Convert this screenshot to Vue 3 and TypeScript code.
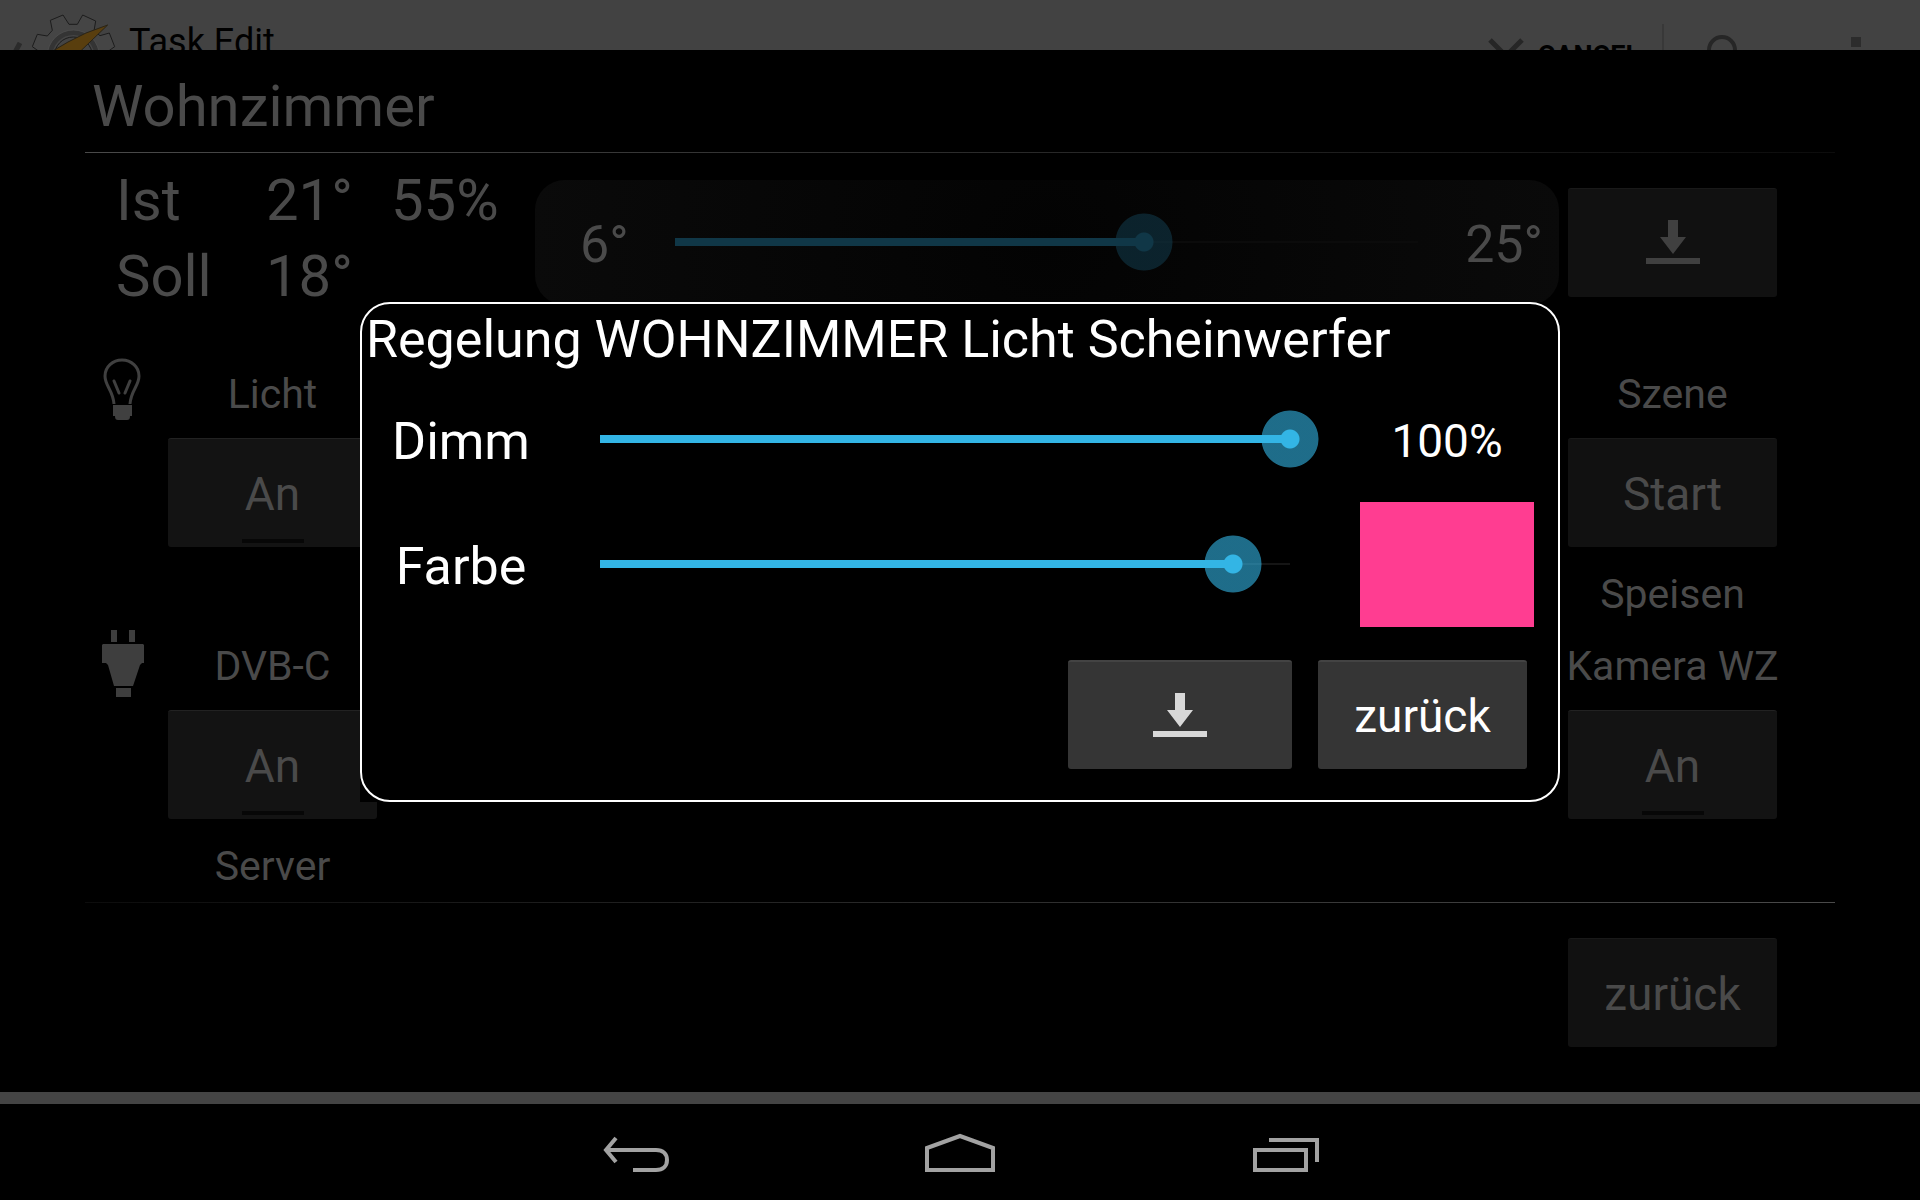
<script setup lang="ts">
import { computed, ref } from 'vue'

interface Device {
  icon?: 'bulb' | 'plug'
  label: string
  button: string
  toggle: boolean
  next?: string
}

const leftDevices: Device[] = [
  { icon: 'bulb', label: 'Licht', button: 'An', toggle: true },
  { icon: 'plug', label: 'DVB-C', button: 'An', toggle: true, next: 'Server' },
]

const rightDevices: Device[] = [
  { label: 'Szene', button: 'Start', toggle: false, next: 'Speisen' },
  { label: 'Kamera WZ', button: 'An', toggle: true },
]

const target = ref(18)
const dim = ref(100)
const hue = ref(330)

const targetFill = computed(() => `${((target.value - 6) / 19) * 100}%`)
const hueFill = computed(() => `${(hue.value / 360) * 100}%`)
const swatch = computed(() => `hsl(${hue.value + 4}, 100%, 62%)`)
</script>

<template>
  <div class="screen">
    <div class="window">
      <header class="actionbar">
        <div class="actionbar-row">
          <svg class="chevron" width="12" height="28" viewBox="0 0 12 28">
            <path d="M10 1 3 14l7 13" fill="none" stroke="#2b2b2b" stroke-width="5" />
          </svg>
          <svg class="gear" width="84" height="84" viewBox="96 39 252 252">
            <path
              d="M97 137l15-37 30 5 15-17-6-30 38-16 18 28h25l16-28 39 18-5 30 18 14 28-8 16 41-24 17v22l24 17-16 38-30-6-17 17 6 30-38 16-17-25h-24l-17 25-38-16 6-30-17-17-30 6-16-38 25-17v-22z"
              fill="#454545" stroke="#1c1c1c" stroke-width="3" />
            <circle cx="220" cy="165" r="70" fill="none" stroke="#343434" stroke-width="14" />
            <circle cx="220" cy="165" r="78" fill="none" stroke="#505050" stroke-width="2" />
            <circle cx="220" cy="165" r="57" fill="#444" stroke="#1c1c1c" stroke-width="3" />
            <path d="M323 72 258 96l-54 27-44 26-42 51 60-2 66-50z" fill="#593e0e" stroke="#2a2417" stroke-width="3" />
          </svg>
          <h2 class="task-title">Task Edit</h2>
          <button class="bar-button cancel" type="button">
            <svg width="36" height="36" viewBox="0 0 36 36">
              <path d="M2 2l32 32M34 2 2 34" stroke="#262626" stroke-width="5" />
            </svg>
            CANCEL
          </button>
          <span class="separator"></span>
          <button class="bar-button search" type="button" aria-label="Suchen">
            <svg width="42" height="42" viewBox="0 0 42 42">
              <circle cx="15" cy="15" r="13" fill="none" stroke="#262626" stroke-width="4" />
              <path d="M24 24l15 15" stroke="#262626" stroke-width="5" />
            </svg>
          </button>
          <button class="bar-button" type="button" aria-label="Mehr">
            <svg width="10" height="38" viewBox="0 0 10 38">
              <path d="M0 0h10v10H0zM0 14h10v10H0zM0 28h10v10H0z" fill="#2c2c2c" />
            </svg>
          </button>
        </div>
      </header>

      <main class="scene">
        <h1 class="room">Wohnzimmer</h1>
        <hr class="rule" />

        <section class="climate">
          <dl class="readings">
            <dt>Ist</dt>
            <dd>21°</dd>
            <dd>55%</dd>
            <dt>Soll</dt>
            <dd>18°</dd>
          </dl>
          <div class="thermostat">
            <span class="limit">6°</span>
            <input
              v-model.number="target" class="range dimmed" type="range" min="6" max="25"
              aria-label="Solltemperatur" :style="{ '--fill': targetFill }" />
            <span class="limit upper">25°</span>
          </div>
          <button class="key" type="button" aria-label="Übernehmen">
            <svg width="54" height="44" viewBox="0 0 54 44" fill="currentColor">
              <path d="M14 17h8V0h10v17h8L27 34zM0 38h54v6H0z" />
            </svg>
          </button>
        </section>

        <section class="devices">
          <div class="column">
            <div v-for="d in leftDevices" :key="d.label" class="device">
              <svg v-if="d.icon === 'bulb'" class="device-icon" width="42" height="70" viewBox="0 0 42 70">
                <path
                  d="M12 46C11 32 3 28 3 18a17 16 0 0 1 34 0c0 10-8 14-9 28"
                  fill="none" stroke="#404040" stroke-width="3" />
                <path d="M12 23l5 12M28 23l-5 12" stroke="#404040" stroke-width="3" stroke-linecap="round" />
                <path d="M11 47h19v11h-2c0 3-1 4-3 4h-9c-2 0-3-1-3-4h-2z" fill="#404040" />
              </svg>
              <svg v-else class="device-icon" width="42" height="70" viewBox="0 0 42 70">
                <path
                  d="M9 0h6v12H9zM27 0h6v12h-6zM1 14h40l1 1v18h-2l-2 2-7 21H12L6 35l-2-2H0V15zM14 58h15v9H14z"
                  fill="#3e3e3e" />
              </svg>
              <span class="caption">{{ d.label }}</span>
              <button class="key" :class="{ toggle: d.toggle }" type="button">{{ d.button }}</button>
              <span class="caption follow">{{ d.next }}</span>
            </div>
          </div>
          <div class="column">
            <div v-for="d in rightDevices" :key="d.label" class="device plain">
              <span class="caption">{{ d.label }}</span>
              <button class="key" :class="{ toggle: d.toggle }" type="button">{{ d.button }}</button>
              <span class="caption follow">{{ d.next }}</span>
            </div>
          </div>
        </section>

        <hr class="rule reverse" />
        <footer class="scene-footer">
          <button class="key" type="button">zurück</button>
        </footer>
      </main>

      <div class="overlay">
        <div class="dialog" role="dialog" aria-labelledby="dialog-title">
          <div class="dialog-frame">
            <h2 id="dialog-title" class="dialog-title">Regelung WOHNZIMMER Licht Scheinwerfer</h2>
            <div class="control">
              <label for="dim">Dimm</label>
              <input
                id="dim" v-model.number="dim" class="range" type="range" min="0" max="100"
                :style="{ '--fill': dim + '%' }" />
              <output for="dim">{{ dim }}%</output>
            </div>
            <div class="control">
              <label for="hue">Farbe</label>
              <input
                id="hue" v-model.number="hue" class="range" type="range" min="0" max="360"
                :style="{ '--fill': hueFill }" />
              <div class="swatch" :style="{ backgroundColor: swatch }"></div>
            </div>
            <div class="actions">
              <button class="key bright wide" type="button" aria-label="Übernehmen">
                <svg width="54" height="44" viewBox="0 0 54 44" fill="#d8d8d8">
                  <path d="M14 17h8V0h10v17h8L27 34zM0 38h54v6H0z" />
                </svg>
              </button>
              <button class="key bright" type="button">zurück</button>
            </div>
          </div>
        </div>
      </div>
    </div>

    <nav class="navbar">
      <button type="button" aria-label="Zurück">
        <svg width="72" height="40" viewBox="0 0 72 40">
          <path d="M7 18h50c7 0 11 4 11 10s-4 10-11 10H34M17 6 7 18l10 12" />
        </svg>
      </button>
      <button type="button" aria-label="Startseite">
        <svg width="72" height="40" viewBox="0 0 72 40">
          <path d="M3 38V16L36 4l33 12v22z" />
        </svg>
      </button>
      <button type="button" aria-label="Letzte Apps">
        <svg width="72" height="40" viewBox="0 0 72 40">
          <path d="M6 18h51v20H6zM20 8h48v22" />
        </svg>
      </button>
    </nav>
  </div>
</template>

<style>
body {
  margin: 0;
  background: #000;
}
</style>

<style scoped>
.screen {
  display: flex;
  flex-direction: column;
  min-height: 100vh;
  background: #000;
  color: #4a4a4a;
  font-family: Roboto, "Noto Sans", sans-serif;
}

.screen * {
  box-sizing: border-box;
}

h1,
h2,
dl,
dd {
  margin: 0;
  font-weight: 400;
}

button {
  font-family: inherit;
  border: 0;
  padding: 0;
}

svg {
  display: block;
  flex: none;
}

.window {
  position: relative;
  flex: 1;
  display: flex;
  flex-direction: column;
  border-bottom: 12px solid #444;
}

.actionbar {
  height: 50px;
  overflow: hidden;
  background: #424242;
}

.actionbar-row {
  display: flex;
  align-items: center;
  height: 112px;
  padding: 0 59px 0 10px;
}

.gear {
  margin-left: 10px;
}

.task-title {
  flex: 1;
  margin-left: 13px;
  padding-bottom: 28px;
  color: #000;
  font-size: 36px;
  line-height: 42px;
}

.bar-button {
  display: flex;
  align-items: center;
  background: none;
}

.cancel {
  gap: 14px;
  color: #000;
  font-size: 27px;
  font-weight: 700;
}

.separator {
  width: 2px;
  height: 64px;
  margin: 0 43px 0 22px;
  background: #383838;
}

.search {
  margin-right: 102px;
}

.scene {
  flex: 1;
  padding: 0 85px;
}

.room {
  padding: 11px 0 1px 7px;
  font-size: 58px;
  line-height: 90px;
}

.rule {
  height: 1px;
  margin: 0;
  border: 0;
  background: linear-gradient(to right, #4a4a4a, #0c0c0c);
}

.rule.reverse {
  background: linear-gradient(to left, #4a4a4a, #0c0c0c);
}

.climate {
  display: flex;
  align-items: center;
  padding: 9px 58px 0 31px;
}

.readings {
  display: grid;
  grid-template-columns: 150px 125px auto;
  align-content: start;
  justify-content: start;
  width: 419px;
  padding-bottom: 9px;
  font-size: 58px;
  line-height: 76px;
}

.thermostat {
  flex: 1;
  display: flex;
  align-items: center;
  height: 125px;
  margin-right: 9px;
  padding: 0 16px 2px 45px;
  border-radius: 30px;
  background: radial-gradient(circle, #030303, #0a0a0a);
}

.limit {
  width: 66px;
  padding-top: 5px;
  font-size: 52px;
}

.limit.upper {
  width: 96px;
  text-align: right;
}

.range {
  --line: #33b5e5;
  --halo: rgba(51, 181, 229, 0.6);
  --rail: #151515;
  flex: 1;
  min-width: 0;
  height: 58px;
  margin: 0;
  appearance: none;
  background:
    linear-gradient(to right, var(--line) var(--fill), transparent 0) center / calc(100% - 58px) 8px no-repeat,
    linear-gradient(var(--rail), var(--rail)) center / calc(100% - 58px) 2px no-repeat;
}

.range.dimmed {
  --line: #103747;
  --halo: rgba(16, 55, 71, 0.6);
  --rail: #0b0b0b;
}

.range::-webkit-slider-thumb {
  width: 58px;
  height: 58px;
  appearance: none;
  border-radius: 50%;
  background: radial-gradient(circle, var(--line) 9px, var(--halo) 10px, var(--halo) 28px, transparent 29px);
}

.key {
  display: flex;
  align-items: center;
  justify-content: center;
  width: 209px;
  height: 109px;
  padding-top: 1px;
  border-top: 1px solid #191919;
  border-radius: 3px;
  background: #111;
  color: #4a4a4a;
  font-size: 46px;
  line-height: 54px;
}

.key svg {
  margin-bottom: 3px;
  color: #404040;
}

.key.toggle {
  border-top-color: #222;
  background: linear-gradient(#070707, #070707) center bottom 4px / 62px 4px no-repeat #131313;
}

.key.bright {
  border-top: 2px solid #434343;
  background: #353535;
  color: #fff;
}

.key.wide {
  width: 224px;
}

.devices {
  display: flex;
  justify-content: space-between;
  margin-top: 46px;
  padding: 0 58px 11px 17px;
}

.column {
  display: flex;
  flex-direction: column;
  gap: 22px;
}

.device {
  display: grid;
  grid-template-columns: 42px 209px;
  grid-template-rows: 69px 131px 50px;
  column-gap: 24px;
}

.device.plain {
  grid-template-columns: 209px;
}

.device-icon {
  align-self: start;
  margin-top: -11px;
}

.device .key,
.follow {
  grid-column: -2;
}

.caption {
  justify-self: center;
  font-size: 41px;
  line-height: 50px;
  white-space: nowrap;
}

.scene-footer {
  display: flex;
  justify-content: flex-end;
  padding: 35px 58px 45px 0;
}

.overlay {
  position: absolute;
  inset: 0 0 -12px;
  display: grid;
  place-items: center;
}

.dialog {
  width: 62.5%;
  background: #000;
  color: #fff;
}

.dialog-frame {
  padding-bottom: 31px;
  border: 2px solid #fff;
  border-radius: 30px;
}

.dialog-title {
  padding: 0 0 2px 4px;
  font-size: 52px;
  line-height: 71px;
  white-space: nowrap;
}

.control {
  display: grid;
  grid-template-columns: 150px 1fr 174px;
  align-items: center;
  height: 125px;
  padding: 0 24px;
}

.control .range {
  margin: 0 41px 2px 35px;
}

.control label,
.control output {
  padding-top: 3px;
  text-align: center;
  font-size: 52px;
}

.control output {
  font-size: 46px;
}

.swatch {
  height: 125px;
}

.actions {
  display: flex;
  justify-content: flex-end;
  gap: 26px;
  padding: 33px 31px 0;
}

.navbar {
  display: flex;
  justify-content: center;
  height: 96px;
}

.navbar button {
  display: flex;
  align-items: center;
  justify-content: center;
  width: 325px;
  background: none;
}

.navbar path {
  fill: none;
  stroke: #a2a2a2;
  stroke-width: 4;
}
</style>
